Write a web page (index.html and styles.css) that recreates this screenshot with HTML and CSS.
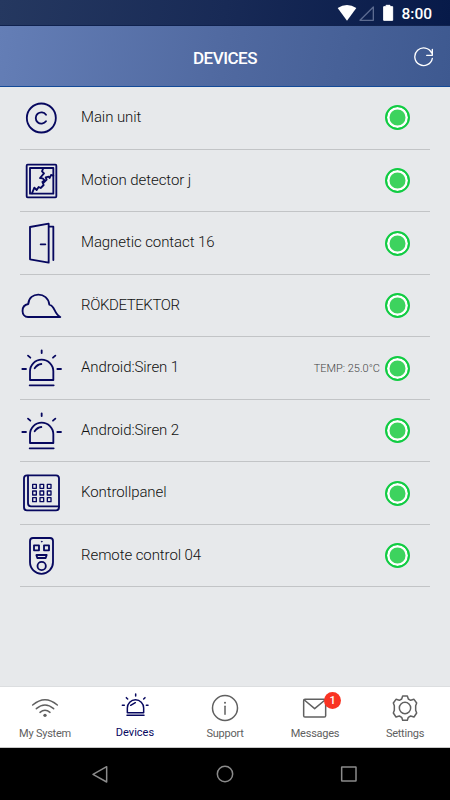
FILE: index.html
```
<!DOCTYPE html>
<html lang="en">
<head>
    <meta charset="UTF-8">
    <meta name="viewport" content="width=device-width, initial-scale=1.0">
    <title>Devices</title>
    <link rel="stylesheet" href="styles.css">
</head>
<body>
    <svg class="sprite">
        <symbol id="siren" viewBox="30 34 132 132">
            <path d="M60 136V110a35 35 0 0 1 70 0v26zM59 152h72M74 101q8-12 20-13M95 47v8M54 63l7 6M136 63l-7 6M37 103h11M142 103h11"/>
        </symbol>
    </svg>

    <div class="status-bar">
        <svg class="status-icons" viewBox="339 12 171 54">
            <path d="M341 24Q369 6 397 24L369 62z" fill="#fff"/>
            <path d="M408 61L448 21V61z" fill="none" stroke="#5c6b90" stroke-width="4"/>
            <path d="M487 16h11v4h8v41h-27V20h8z" fill="#fff" stroke="#fff" stroke-width="3"/>
        </svg>
        <span class="clock">8:00</span>
    </div>

    <header class="header">
        <h1>DEVICES</h1>
        <svg class="refresh" viewBox="564 137 66 66">
            <path d="M620 155A26.500 26.500 0 1 0 622 171M622 144v18h-17"/>
        </svg>
    </header>

    <main class="content">
        <ul class="devices">
            <li class="device">
                <svg class="device-icon" viewBox="30 18 132 132">
                    <circle cx="94" cy="84" r="43.500"/>
                    <path d="M108 74a17 17 0 1 0 0 20"/>
                </svg>
                <span class="name">Main unit</span>
                <span class="status"></span>
            </li>
            <li class="device">
                <svg class="device-icon" viewBox="30 206 132 132">
                    <rect x="50" y="223" width="89" height="98" rx="3"/>
                    <rect x="60" y="233" width="70" height="77"/>
                    <path d="M66 309l7-17 7 7 6-9 6 3 9-9-4-9 7-5-6-6-8-1 12-14-6-6 4-10M101 277l9-9-3-7 9-2 3 4 4-9 7 2"/>
                </svg>
                <span class="name">Motion detector j</span>
                <span class="status"></span>
            </li>
            <li class="device">
                <svg class="device-icon" viewBox="30 33 132 132">
                    <path d="M60 51l56-10v117l-56-10zM117 50h13v100M92 103h14"/>
                </svg>
                <span class="name">Magnetic contact 16</span>
                <span class="status"></span>
            </li>
            <li class="device">
                <svg class="device-icon" viewBox="30 221 132 132">
                    <path d="M151 320H54c-21 0-23-35 1-39 1-38 59-38 63 2 18 4 14 29 33 37z"/>
                </svg>
                <span class="name upper">RÖKDETEKTOR</span>
                <span class="status"></span>
            </li>
            <li class="device">
                <svg class="device-icon"><use href="#siren"/></svg>
                <span class="name">Android:Siren 1</span>
                <span class="temp">TEMP: 25.0°C</span>
                <span class="status"></span>
            </li>
            <li class="device">
                <svg class="device-icon"><use href="#siren"/></svg>
                <span class="name">Android:Siren 2</span>
                <span class="status"></span>
            </li>
            <li class="device">
                <svg class="device-icon" viewBox="30 34 132 132">
                    <rect x="42" y="47" width="105" height="105" rx="9"/>
                    <path d="M54 48v83q0 9 9 9h84"/>
                    <path class="thin" d="M68 74h11v12h-11zM90 74h11v12h-11zM112 74h11v12h-11zM68 94h11v12h-11zM90 94h11v12h-11zM112 94h11v12h-11zM68 114h11v12h-11zM90 114h11v12h-11zM112 114h11v12h-11z"/>
                </svg>
                <span class="name">Kontrollpanel</span>
                <span class="status"></span>
            </li>
            <li class="device">
                <svg class="device-icon" viewBox="30 221 132 132">
                    <path d="M60 242q0-9 9-9h51q9 0 9 9v64a34.500 34.500 0 0 1-69 0zM72 255h15v15H72zM102 255h15v15h-15zM79 284h31l-3 9H82z"/>
                    <circle cx="95" cy="317" r="12.500"/>
                    <circle cx="95" cy="244" r="1" stroke-width="3"/>
                </svg>
                <span class="name">Remote control 04</span>
                <span class="status"></span>
            </li>
        </ul>
    </main>

    <nav class="tabs">
        <a class="tab">
            <svg class="tab-icon" viewBox="89 39 90 90">
                <path d="M97 75q37-32 74 0M108 86q26-22 52 0M119 97q15-12 30 0"/>
                <circle class="dot" cx="134" cy="106" r="5"/>
            </svg>
            <span>My System</span>
        </a>
        <a class="tab active">
            <svg class="tab-icon" viewBox="360 39 90 90">
                <path d="M382 98V84a24.500 24.500 0 0 1 49 0v14zM381 106h51M392 76l14-8M407 42v6M379 53l4 4M435 53l-4 4M367 76h6M439 76h5"/>
            </svg>
            <span>Devices</span>
        </a>
        <a class="tab">
            <svg class="tab-icon" viewBox="-45 39 90 90">
                <circle cx="0" cy="84" r="37.500"/>
                <path d="M0 79v24"/>
                <circle class="dot" cx="0" cy="68" r="3"/>
            </svg>
            <span>Support</span>
        </a>
        <a class="tab">
            <svg class="tab-icon" viewBox="225 39 90 90">
                <rect x="236" y="58" width="66" height="53" rx="4"/>
                <path d="M238 60l31 26 31-26"/>
            </svg>
            <span class="badge">1</span>
            <span>Messages</span>
        </a>
        <a class="tab">
            <svg class="tab-icon" viewBox="494 39 90 90">
                <path d="M532 48h14l3 9 7 4 10-3 8 11-3 8v14l3 8-8 12-10-3-7 4-3 9h-14l-3-9-7-4-10 3-8-12 3-8V77l-3-8 8-11 10 3 7-4z"/>
                <circle cx="539" cy="84" r="17"/>
            </svg>
            <span>Settings</span>
        </a>
    </nav>

    <div class="android-nav">
        <svg viewBox="272 250 60 60"><path d="M281 281l41-23v46z"/></svg>
        <svg viewBox="-30 251 60 60"><circle cx="0" cy="281" r="23"/></svg>
        <svg viewBox="343 251 60 60"><rect x="351" y="260" width="43" height="42" rx="1"/></svg>
    </div>
</body>
</html>
```
FILE: styles.css
```
* {
    box-sizing: border-box;
}
body {
    margin: 0;
    height: 800px;
    display: flex;
    flex-direction: column;
    overflow: hidden;
    background-color: #e7e9eb;
    font-family: Roboto, "Liberation Sans", sans-serif;
    color: #111;
}
svg {
    display: block;
    fill: none;
    stroke-linejoin: round;
    stroke-linecap: round;
}
.sprite {
    display: none;
}
.status-bar {
    height: 26px;
    display: flex;
    align-items: center;
    justify-content: flex-end;
    gap: 7px;
    padding-right: 18px;
    background: linear-gradient(100deg, #253860, #182a56 50%, #071a49);
    border-bottom: 1px solid #10224e;
}
.status-icons {
    width: 57px;
    height: 18px;
}
.clock {
    color: #fff;
    font-size: 15.5px;
    font-weight: 500;
    line-height: 26px;
    padding-top: 2px;
}
.header {
    height: 61px;
    display: grid;
    grid-template-columns: 1fr auto 1fr;
    align-items: center;
    padding-right: 15px;
    padding-left: 15px;
    background: linear-gradient(100deg, #647eb6, #5069a0 50%, #3e5990);
    border-bottom: 1px solid #134a98;
}
.header h1 {
    grid-column: 2;
    margin: 3px 0 0;
    color: #fff;
    font-size: 17px;
    font-weight: 500;
    line-height: 20px;
    letter-spacing: -0.5px;
}
.refresh {
    width: 22px;
    height: 22px;
    margin-top: 3px;
    justify-self: end;
    stroke: #fff;
    stroke-width: 4;
}
.content {
    flex: 1;
    padding: 0 20px;
}
.devices {
    margin: 0;
    padding: 0;
    list-style: none;
}
.device {
    height: 62.5px;
    display: flex;
    align-items: center;
    padding-right: 20px;
    border-bottom: 1px solid #c2c4c6;
}
.device:first-child {
    height: 62.9px;
}
.device-icon {
    width: 44px;
    height: 44px;
    stroke: #07085f;
    stroke-width: 5.5;
}
.device-icon .thin {
    stroke-width: 4;
}
.name {
    flex: 1;
    margin: -2px 0 0 17px;
    font-size: 15px;
    font-weight: 300;
    letter-spacing: -0.08px;
}
.name.upper {
    letter-spacing: -0.4px;
}
.temp {
    margin-right: 5px;
    padding-top: 1px;
    color: #444;
    font-size: 11px;
    font-weight: 300;
}
.status {
    width: 25px;
    height: 25px;
    border: 2.5px solid #10cc42;
    border-radius: 50%;
    background-color: #3dd35e;
    box-shadow: inset 0 0 0 2.5px #fff;
}
.tabs {
    height: 62px;
    display: flex;
    background-color: #fff;
    border-top: 1px solid #dcdee0;
    border-bottom: 1px solid #c8c8c8;
}
.tab {
    flex: 1;
    position: relative;
    display: flex;
    flex-direction: column;
    align-items: center;
    padding-top: 6px;
    color: #606060;
    font-size: 11px;
    line-height: 18px;
    letter-spacing: -0.25px;
}
.tab-icon {
    width: 30px;
    height: 30px;
    margin-bottom: 2px;
    stroke: #606060;
    stroke-width: 4.5;
}
.tab .dot {
    fill: #606060;
    stroke: none;
}
.tab.active {
    color: #07085f;
    letter-spacing: 0;
}
.tab.active span {
    margin-top: -1px;
}
.tab.active .tab-icon {
    stroke: #07085f;
}
.badge {
    position: absolute;
    top: 5px;
    left: 54px;
    width: 17px;
    height: 17px;
    border-radius: 50%;
    background-color: #f93322;
    color: #fff;
    font-size: 11px;
    font-weight: 500;
    line-height: 17px;
    text-align: center;
}
.android-nav {
    height: 52px;
    display: flex;
    align-items: center;
    justify-content: space-between;
    padding: 0 91px 0 90px;
    background-color: #000;
}
.android-nav svg {
    width: 20px;
    height: 20px;
    stroke: #8b8b8b;
    stroke-width: 4.5;
}
```
